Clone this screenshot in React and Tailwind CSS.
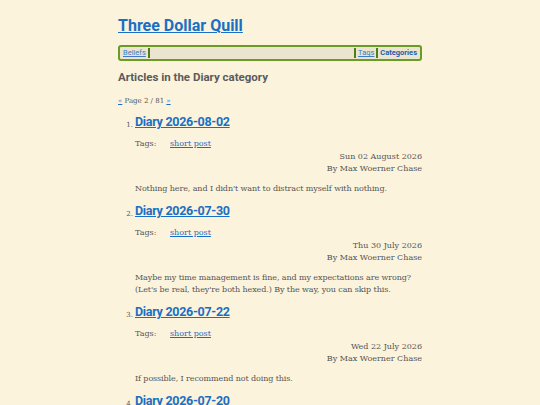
const articles = [
  {
    title: 'Diary 2026-08-02',
    date: 'Sun 02 August 2026',
    body: "Nothing here, and I didn't want to distract myself with nothing.",
  },
  {
    title: 'Diary 2026-07-30',
    date: 'Thu 30 July 2026',
    body: "Maybe my time management is fine, and my expectations are wrong? (Let's be real, they're both hexed.) By the way, you can skip this.",
  },
  {
    title: 'Diary 2026-07-22',
    date: 'Wed 22 July 2026',
    body: 'If possible, I recommend not doing this.',
  },
  {
    title: 'Diary 2026-07-20',
    date: 'Mon 20 July 2026',
    body: 'Another short one.',
  },
];

const sans = "font-['Roboto','Noto_Sans',sans-serif]";
const serif = "font-['DejaVu_Serif','Liberation_Serif',serif]";

function Article({ n, a }) {
  return (
    <li className="flex">
      <span className={`${serif} w-[17px] shrink-0 pt-[6px] pr-[2px] text-right text-[7px] leading-[10px] text-[#555]`}>{n}.</span>
      <div className="flex-1">
        <a href="#" className={`${sans} block text-[12.5px] font-bold leading-[16px] tracking-[-0.3px] text-[#1a6fc4] underline`}>
          {a.title}
        </a>
        <div className={`${serif} mt-[8px] text-[8px] leading-[12px] text-[#555]`}>
          <div className="flex">
            <span className="w-[35px]">Tags:</span>
            <a href="#" className="text-[#1a6fc4] underline">short post</a>
          </div>
          <div className="mt-[1px] text-right">{a.date}</div>
          <div className="text-right">By Max Woerner Chase</div>
          <p className="mt-[8px] tracking-[-0.1px]">{a.body}</p>
        </div>
      </div>
    </li>
  );
}

export default function App() {
  return (
    <div className="h-[405px] overflow-hidden bg-[#fbf3dc]">
      <div className="mx-auto w-[304px] pt-[14px]">
        <h1 className={`${sans} text-[16px] font-bold leading-[24px]`}>
          <a href="#" className="text-[#1a6fc4] underline">Three Dollar Quill</a>
        </h1>
        <nav className={`${sans} mt-[7px] flex h-[16px] items-center rounded-[3px] border-2 border-[#6b9a26] bg-[#ebe4cf] px-[2px] text-[7.5px] leading-none`}>
          <a href="#" className="px-[1px] text-[#3b7cc4] underline">Beliefs</a>
          <span className="mx-[1px] h-[10px] w-[2px] bg-[#4f7d1c]" />
          <span className="flex-1" />
          <span className="mx-[1px] h-[10px] w-[2px] bg-[#4f7d1c]" />
          <a href="#" className="px-[1px] text-[#3b7cc4] underline">Tags</a>
          <span className="mx-[1px] h-[10px] w-[2px] bg-[#4f7d1c]" />
          <a href="#" className="px-[1px] font-bold text-[#1a5fa8]">Categories</a>
        </nav>
        <h2 className={`${sans} mt-[8px] text-[11.5px] font-bold leading-[16px] text-[#5b5b5b]`}>
          Articles in the Diary category
        </h2>
        <p className={`${serif} mt-[11px] text-[7px] leading-[10px] text-[#555]`}>
          <a href="#" className="text-[#1a6fc4] underline">«</a> Page 2 / 81{' '}
          <a href="#" className="text-[#1a6fc4] underline">»</a>
        </p>
        <ol className="mt-[8px] flex flex-col gap-[8px]">
          {articles.map((a, i) => (
            <Article key={a.title} n={i + 1} a={a} />
          ))}
        </ol>
      </div>
    </div>
  );
}
